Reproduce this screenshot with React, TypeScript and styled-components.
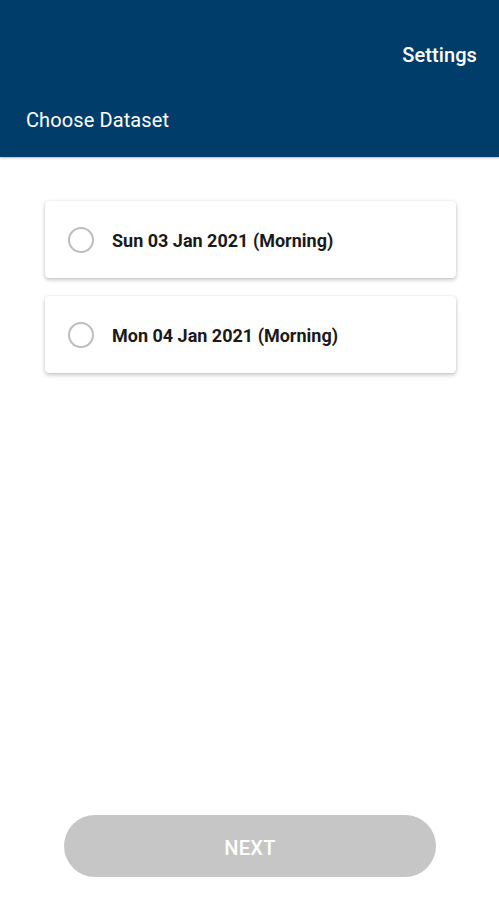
import React, { useState } from "react";
import styled, { createGlobalStyle } from "styled-components";

const Global = createGlobalStyle`
  html, body { margin: 0; padding: 0; background: #ffffff; }
  body { font-family: Roboto, "Noto Sans", Arial, sans-serif; }
  * { box-sizing: border-box; }
`;

const Page = styled.div`
  min-height: 100vh;
  display: flex;
  flex-direction: column;
  background: #ffffff;
`;

const Header = styled.header`
  background: #013d6a;
  height: 157px;
  display: flex;
  flex-direction: column;
  box-shadow: 0 1px 2px rgba(0, 0, 0, 0.3);
  position: relative;
  z-index: 1;
`;

const TopBar = styled.div`
  height: 110px;
  display: flex;
  align-items: center;
  justify-content: flex-end;
  padding-right: 22px;
`;

const SettingsLink = styled.span`
  color: #ffffff;
  font-size: 20px;
  font-weight: 500;
  line-height: 22px;
  letter-spacing: 0.1px;
`;

const Title = styled.h1`
  margin: 0;
  padding-left: 26px;
  color: #ffffff;
  font-size: 20px;
  font-weight: 400;
  line-height: 20px;
  letter-spacing: 0.1px;
`;

const List = styled.div`
  flex: 1;
  display: flex;
  flex-direction: column;
  gap: 18px;
  padding: 44px 43px 0 45px;
`;

const Card = styled.label`
  height: 77px;
  background: #ffffff;
  border-radius: 4px;
  box-shadow: 0 2px 4px rgba(0, 0, 0, 0.22), 0 0 2px rgba(0, 0, 0, 0.1);
  display: flex;
  align-items: center;
  gap: 18px;
  padding-left: 23px;
  cursor: pointer;
`;

const Radio = styled.span<{ $checked: boolean }>`
  width: 26px;
  height: 26px;
  border-radius: 50%;
  border: 2.5px solid ${(p) => (p.$checked ? "#013d6a" : "#bdbdbd")};
  display: flex;
  align-items: center;
  justify-content: center;
  &::after {
    content: "";
    width: 12px;
    height: 12px;
    border-radius: 50%;
    background: ${(p) => (p.$checked ? "#013d6a" : "transparent")};
  }
`;

const CardText = styled.span`
  font-size: 18px;
  font-weight: 700;
  color: #1a1a1a;
  padding-top: 2px;
`;

const Footer = styled.div`
  padding: 0 63px 23px 64px;
`;

const NextButton = styled.button`
  width: 100%;
  height: 62px;
  border: none;
  border-radius: 31px;
  background: #c6c6c6;
  color: #ffffff;
  font-family: Roboto, Arial, sans-serif;
  font-size: 20px;
  font-weight: 500;
  letter-spacing: 0.3px;
  padding: 3px 0 0;
`;

const datasets = ["Sun 03 Jan 2021 (Morning)", "Mon 04 Jan 2021 (Morning)"];

export default function App() {
  const [selected, setSelected] = useState<number | null>(null);
  return (
    <Page>
      <Global />
      <Header>
        <TopBar>
          <SettingsLink>Settings</SettingsLink>
        </TopBar>
        <Title>Choose Dataset</Title>
      </Header>
      <List>
        {datasets.map((d, i) => (
          <Card key={d} onClick={() => setSelected(i)}>
            <Radio $checked={selected === i} />
            <CardText>{d}</CardText>
          </Card>
        ))}
      </List>
      <Footer>
        <NextButton disabled={selected === null}>NEXT</NextButton>
      </Footer>
    </Page>
  );
}
